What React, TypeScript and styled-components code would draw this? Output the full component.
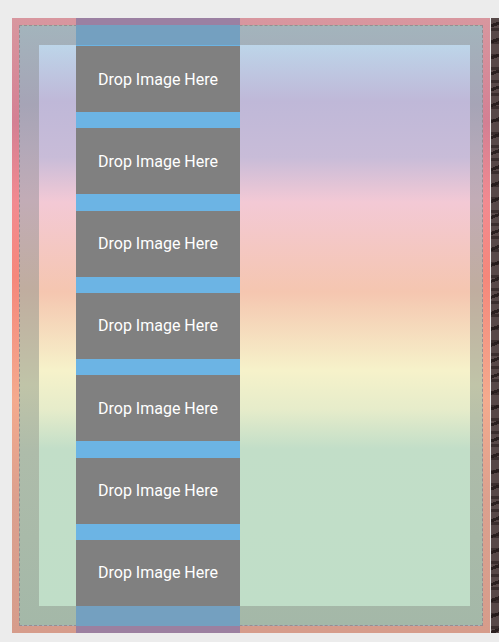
import styled, { createGlobalStyle } from "styled-components";

const GlobalStyle = createGlobalStyle`
	html, body {
		margin: 0;
		background-color: #ececec;
		overflow: hidden;
		font-family: Roboto, "Liberation Sans", sans-serif;
	}
`;

const Page = styled.div`
	display: flex;
	gap: 1px;
	padding: 18px 0 0 12px;
	height: 642px;
	box-sizing: border-box;
`;

const Frame = styled.div`
	flex-shrink: 0;
	display: grid;
	width: 478px;
	height: 615px;
	background: linear-gradient(
		to bottom,
		#d8979f 0%,
		#d47f93 17%,
		#f28a90 30%,
		#f5877b 42%,
		#f4aa8e 62%,
		#dca08e 78%,
		#d69c8b 100%
	);
`;

const PaddingBox = styled.div`
	grid-area: 1 / 1;
	margin: 7px;
	border: 1px dashed #968c92;
	padding: 19px 12px 19px 19px;
	display: flex;
	background: linear-gradient(
		to bottom,
		#a3b4bc 0%,
		#a6a4b6 13%,
		#b2a8b8 20%,
		#c2acb6 29%,
		#c0ad9f 44%,
		#c0c4a8 60%,
		#aebcaa 71%,
		#a4b8a8 100%
	);
`;

const Panel = styled.div`
	flex: 1;
	background: linear-gradient(
		to bottom,
		#bdd5e9 0%,
		#bfb8d8 10%,
		#c8bcd8 20%,
		#f3c9d5 28%,
		#f5c6b0 44%,
		#f6f2ca 58%,
		#e6ecca 65%,
		#c2dec8 72%,
		#c0dec8 100%
	);
`;

const Column = styled.div`
	grid-area: 1 / 1;
	justify-self: start;
	margin-left: 64px;
	width: 164px;
	padding: 27px 0;
	display: flex;
	background: linear-gradient(
		to bottom,
		#9b80a2 0 7px,
		#74a0c0 7px calc(100% - 7px),
		#9c80a0 calc(100% - 7px)
	);
`;

const SlotList = styled.div`
	flex: 1;
	display: flex;
	flex-direction: column;
	justify-content: space-between;
	padding-top: 1px;
	background-color: #6cb4e4;
`;

const Slot = styled.div`
	height: 66px;
	display: flex;
	align-items: center;
	justify-content: center;
	background-color: #808080;
	color: #fff;
	font-size: 16px;
	line-height: 20px;
	padding-top: 1px;
	box-sizing: border-box;
`;

const Edge = styled.div`
	flex-shrink: 0;
	width: 20px;
	height: 615px;
	background-color: #574848;
	background-image: repeating-linear-gradient(
			160deg,
			transparent 0 6px,
			rgba(34, 24, 24, 0.85) 6px 9px,
			transparent 9px 15px
		),
		repeating-linear-gradient(
			to bottom,
			transparent 0 10px,
			rgba(30, 20, 20, 0.5) 10px 13px
		);
`;

const slots = Array.from({ length: 7 }, (_, i) => i);

function App() {
	return (
		<>
			<GlobalStyle />
			<Page>
				<Frame>
					<PaddingBox>
						<Panel />
					</PaddingBox>
					<Column>
						<SlotList>
							{slots.map((i) => (
								<Slot key={i}>Drop Image Here</Slot>
							))}
						</SlotList>
					</Column>
				</Frame>
				<Edge />
			</Page>
		</>
	);
}

export default App;
